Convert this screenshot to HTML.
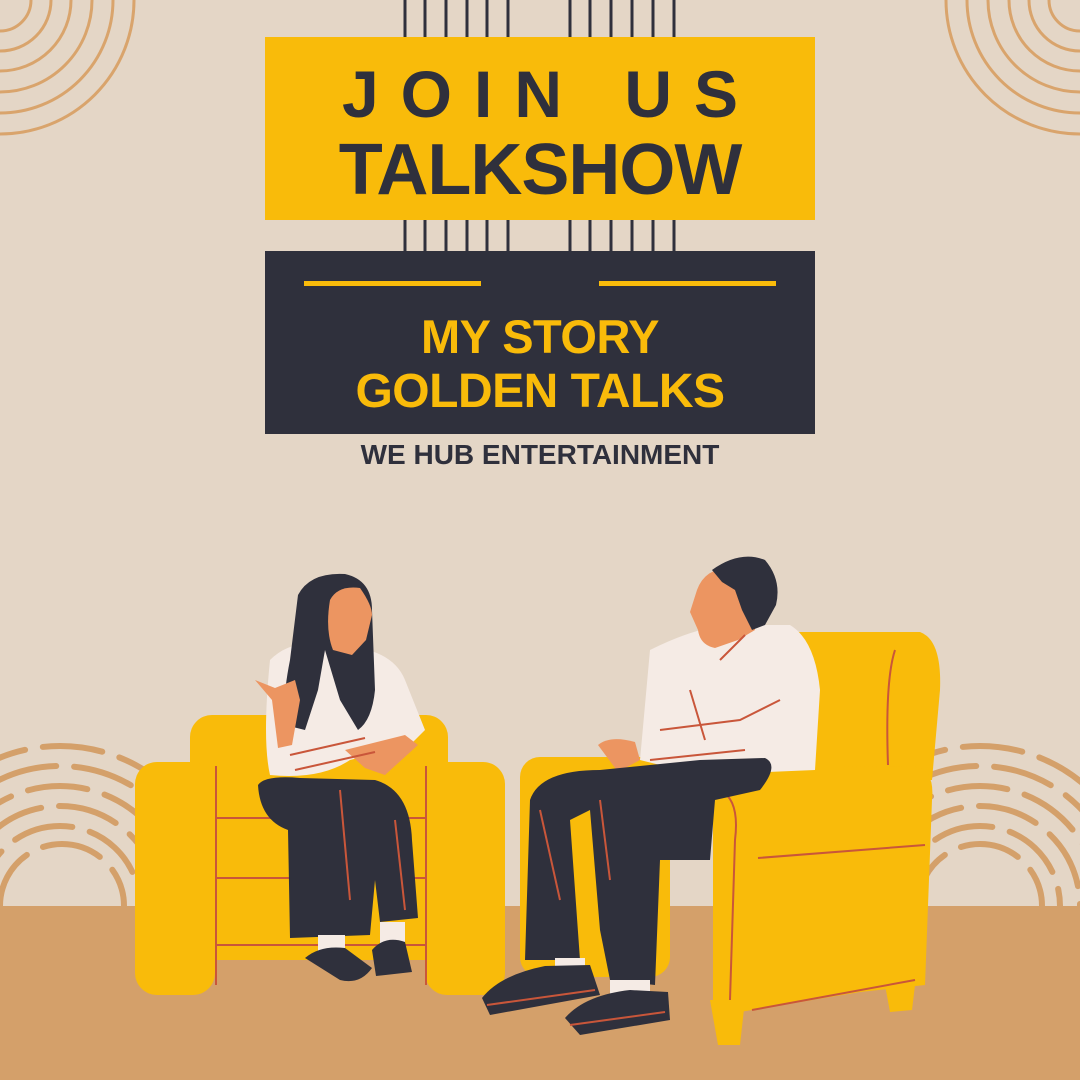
<!DOCTYPE html>
<html><head><meta charset="utf-8"><style>
html,body{margin:0;padding:0}
body{width:1080px;height:1080px;overflow:hidden;background:#e4d6c6;position:relative;font-family:"Liberation Sans",sans-serif}
svg{position:absolute;left:0;top:0}
.t{position:absolute;font-weight:bold;text-align:center;white-space:nowrap}
</style></head><body>
<svg width="1080" height="1080" viewBox="0 0 1080 1080">
<rect x="0" y="906" width="1080" height="174" fill="#d4a06a"/>
<g fill="none" stroke="#d9a46c" stroke-width="3">
<circle cx="0" cy="0" r="134"/><circle cx="0" cy="0" r="113"/><circle cx="0" cy="0" r="92"/><circle cx="0" cy="0" r="71"/><circle cx="0" cy="0" r="51"/><circle cx="0" cy="0" r="31"/>
<circle cx="1080" cy="0" r="134"/><circle cx="1080" cy="0" r="113"/><circle cx="1080" cy="0" r="92"/><circle cx="1080" cy="0" r="71"/><circle cx="1080" cy="0" r="51"/><circle cx="1080" cy="0" r="31"/>
</g>
<g fill="none" stroke="#d4a06a" stroke-width="6" stroke-linecap="round" stroke-dasharray="60 18">
<path d="M-40 906 A100 100 0 0 1 160 906"/><path d="M-20 906 A80 80 0 0 1 140 906"/><path d="M0 906 A62 62 0 0 1 124 906"/><path d="M-60 906 A120 120 0 0 1 180 906"/><path d="M-80 906 A140 140 0 0 1 200 906"/><path d="M-100 906 A160 160 0 0 1 220 906"/>
<path d="M880 906 A100 100 0 0 1 1080 906"/><path d="M900 906 A80 80 0 0 1 1060 906"/><path d="M918 906 A62 62 0 0 1 1042 906"/><path d="M860 906 A120 120 0 0 1 1100 906"/><path d="M840 906 A140 140 0 0 1 1120 906"/><path d="M820 906 A160 160 0 0 1 1140 906"/>
</g>
<g stroke="#2f303c" stroke-width="3">
<path d="M405 0V251M425 0V251M446 0V251M467 0V251M487 0V251M508 0V251M570 0V251M590 0V251M611 0V251M632 0V251M653 0V251M674 0V251"/>
</g>
<rect x="265" y="37" width="550" height="183" fill="#f9bb0a"/>
<rect x="265" y="251" width="550" height="183" fill="#2f303c"/>
<rect x="304" y="281" width="177" height="5" fill="#f9bb0a"/>
<rect x="599" y="281" width="177" height="5" fill="#f9bb0a"/>

<!-- left chair -->
<rect x="190" y="715" width="258" height="245" rx="22" fill="#f9bb0a"/>
<g stroke="#c9563a" stroke-width="2"><path d="M215 818H430M215 878H430M215 945H430"/></g>
<rect x="135" y="762" width="80" height="233" rx="22" fill="#f9bb0a"/>
<rect x="425" y="762" width="80" height="233" rx="22" fill="#f9bb0a"/>
<path d="M216 766V985M426 766V985" stroke="#c9563a" stroke-width="2"/>
<!-- woman -->
<path d="M270 660Q290 640 320 645L360 648Q395 655 405 680L425 730L410 745L350 760Q320 780 270 775Q262 740 270 660Z" fill="#f5ebe5"/>
<path d="M298 595Q310 572 345 574Q372 580 372 610L375 690Q372 720 358 730L340 700L325 650L318 690L305 730L285 725Q282 700 290 660Z" fill="#2f303c"/>
<path d="M330 600Q338 585 360 588Q372 605 372 615L366 640L352 655L333 650Q325 630 330 600Z" fill="#ec9561"/>
<path d="M255 680L275 688L295 680L300 700L292 745L278 748L272 700Z" fill="#ec9561"/>
<path d="M345 750L405 735L418 745L385 775L365 768Z" fill="#ec9561"/>
<path d="M258 785Q265 775 300 778L375 780Q410 790 412 840L418 918L380 922L375 880L370 935L290 938L288 830Q260 820 258 785Z" fill="#2f303c"/>
<path d="M318 935H345V955H318ZM380 922H405V945H380Z" fill="#f5ebe5"/>
<path d="M305 958Q320 945 345 948L372 968Q360 985 340 980Z" fill="#2f303c"/>
<path d="M372 950Q385 935 405 942L412 972L376 976Z" fill="#2f303c"/>
<g stroke="#c9563a" stroke-width="2" fill="none"><path d="M290 755L365 738M295 770L375 752M340 790L350 900M395 820L405 910"/></g>

<!-- right chair -->
<path d="M792 632H920Q942 640 940 690L932 780H792Z" fill="#f9bb0a"/>
<rect x="520" y="757" width="150" height="220" rx="20" fill="#f9bb0a"/>
<path d="M713 800Q720 770 760 768L915 766Q935 770 932 800L925 985L860 992L740 1012L713 1000Z" fill="#f9bb0a"/>
<path d="M710 1000L745 1000L740 1045L718 1045ZM885 985L915 985L912 1010L890 1012Z" fill="#f9bb0a"/>
<g stroke="#c9563a" stroke-width="2" fill="none"><path d="M758 858L925 845M752 1010L915 980M720 790Q740 800 735 840L730 1000M895 650Q885 680 888 765"/></g>
<!-- man -->
<path d="M650 650Q700 625 735 625L790 625Q815 640 820 690L815 770L700 775L640 760Z" fill="#f5ebe5"/>
<path d="M697 590Q705 568 730 568L752 600L755 630L738 640L715 648Q700 645 698 630L690 612Z" fill="#ec9561"/>
<path d="M712 570Q740 550 765 560Q782 580 776 605L765 625L752 630L742 610L735 590L722 582Z" fill="#2f303c"/>
<path d="M598 745Q610 735 635 742L640 760L618 772Z" fill="#ec9561"/>
<path d="M530 800Q540 770 600 770L700 760L765 758Q780 765 760 790L715 800L710 860L660 860L655 985L610 980L600 930L590 810L570 820L580 960L525 960Z" fill="#2f303c"/>
<path d="M555 958H585V975H555ZM610 980H650V995H610Z" fill="#f5ebe5"/>
<path d="M482 998Q500 975 545 966L590 965L600 995L490 1015Z" fill="#2f303c"/>
<path d="M565 1018Q585 995 630 990L668 992L670 1020L580 1035Z" fill="#2f303c"/>
<g stroke="#c9563a" stroke-width="2" fill="none"><path d="M660 730L740 720L780 700M650 760L745 750M540 810L560 900M600 800L610 880M487 1005L595 990M570 1025L665 1012M690 690L705 740M720 660L745 635"/></g>
</svg>
<div class="t" style="left:265px;width:550px;top:54px;font-size:66px;letter-spacing:22px;text-indent:22px;color:#2f303c;line-height:80px">JOIN US</div>
<div class="t" style="left:265px;width:550px;top:130px;font-size:72px;color:#2f303c;line-height:80px;letter-spacing:-1px">TALKSHOW</div>
<div class="t" style="left:265px;width:550px;top:310px;font-size:47px;color:#f9bb0a;line-height:54px;letter-spacing:-0.5px">MY STORY<br><span style="font-size:48px">GOLDEN TALKS</span></div>
<div class="t" style="left:265px;width:550px;top:438px;font-size:28px;color:#2f303c;line-height:34px">WE HUB ENTERTAINMENT</div>
</body></html>
